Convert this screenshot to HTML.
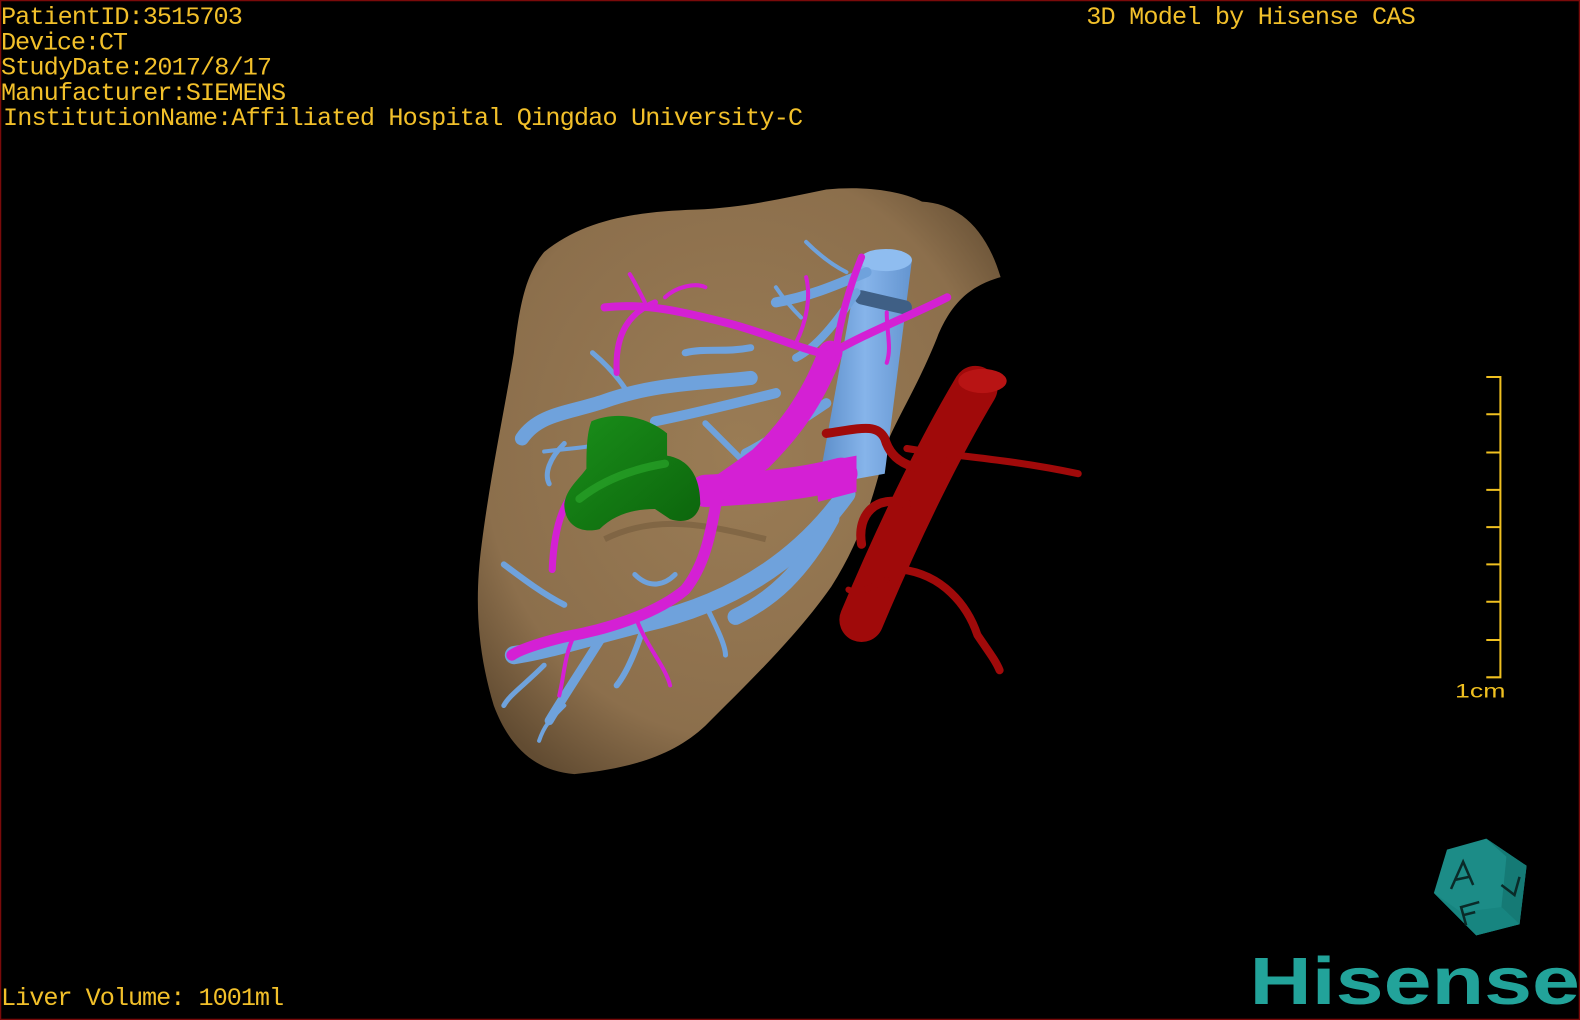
<!DOCTYPE html>
<html><head><meta charset="utf-8"><style>
html,body{margin:0;padding:0;background:#000;width:1580px;height:1020px;overflow:hidden}
svg{display:block}
</style></head><body>
<svg width="1580" height="1020" viewBox="0 0 1568 1012" preserveAspectRatio="none" xmlns="http://www.w3.org/2000/svg">
<defs>
<radialGradient id="lg" cx="0.5" cy="0.45" r="0.65">
<stop offset="0" stop-color="#9a7c55"/><stop offset="0.75" stop-color="#8c6f4c"/><stop offset="1" stop-color="#624c32"/>
</radialGradient>
<linearGradient id="gg" x1="0" y1="0" x2="1" y2="1"><stop offset="0" stop-color="#1a8f1a"/><stop offset="1" stop-color="#0c640c"/></linearGradient>
<linearGradient id="ivc" x1="0" y1="0" x2="1" y2="0"><stop offset="0" stop-color="#5a8cc8"/><stop offset="0.5" stop-color="#86b4ea"/><stop offset="1" stop-color="#6495d0"/></linearGradient>
</defs>
<rect x="0.5" y="0.5" width="1567" height="1011" fill="#000" stroke="#7a0a0a" stroke-width="1.5"/>
<path d="M540,250 C580,218 630,210 690,208 C740,206 780,196 820,188 C860,184 895,190 915,200 C950,202 978,225 993,275 C965,283 945,298 930,335 C912,380 893,410 880,440 C868,490 855,535 825,582 C790,632 740,680 700,720 C670,748 630,762 570,768 C530,765 505,740 490,700 C475,650 470,600 478,540 C487,470 500,410 510,350 C516,300 522,272 540,250 Z" fill="url(#lg)"/>
<path d="M600,535 C650,510 700,520 760,535" stroke="#6d5538" stroke-width="6" fill="none" opacity="0.5"/>
<!-- IVC -->
<path d="M853,256 L905,258 L878,470 L812,482 Z" fill="url(#ivc)"/>
<ellipse cx="879" cy="258" rx="26" ry="11" fill="#8fbdf0"/>
<path d="M855,295 L898,305" stroke="#3f5f85" stroke-width="14" stroke-linecap="round"/>
<g stroke="#6fa2dc" fill="none" stroke-linecap="round" stroke-linejoin="round">
<path d="M840,490 C790,560 720,600 640,618 C590,630 545,645 510,650" stroke-width="18"/>
<path d="M825,515 C795,570 765,595 730,612" stroke-width="16"/>
<path d="M600,628 C580,660 560,690 545,715" stroke-width="9"/>
<path d="M745,375 C700,380 650,380 600,398 C565,410 535,410 518,435" stroke-width="14"/>
<path d="M770,390 C730,400 690,410 650,418" stroke-width="10"/>
<path d="M860,270 C825,285 800,295 770,300" stroke-width="10"/>
<path d="M850,290 C830,320 810,345 790,355" stroke-width="8"/>
<path d="M680,350 C700,345 720,350 745,345" stroke-width="7"/>
<path d="M620,385 C610,370 600,360 588,350" stroke-width="5"/>
<path d="M560,440 C545,455 540,470 545,480" stroke-width="5"/>
<path d="M600,440 C580,445 560,445 540,448" stroke-width="4"/>
<path d="M540,660 C520,680 505,690 500,700" stroke-width="5"/>
<path d="M560,600 C540,590 520,575 500,560" stroke-width="6"/>
<path d="M640,618 C630,650 620,670 612,680" stroke-width="6"/>
<path d="M700,600 C710,620 720,640 720,650" stroke-width="5"/>
<path d="M670,570 C660,580 645,585 630,570" stroke-width="5"/>
<path d="M800,240 C815,255 830,265 840,270" stroke-width="4"/>
<path d="M770,285 C780,300 790,310 795,315" stroke-width="4"/>
<path d="M560,700 C545,715 540,720 535,735" stroke-width="4"/>
<path d="M700,420 C720,440 730,450 740,460" stroke-width="6"/>
<path d="M820,400 C790,420 760,440 740,450" stroke-width="10"/>
</g>
<g stroke="#d420d4" fill="none" stroke-linecap="round" stroke-linejoin="round">
<path d="M700,487 C740,485 790,482 835,470" stroke-width="32"/>
<path d="M824,350 C805,400 780,430 755,455 C735,470 720,480 705,490" stroke-width="24"/>
<path d="M712,492 C705,530 700,560 680,585 C650,610 600,625 560,632 C535,638 515,645 508,650" stroke-width="11"/>
<path d="M822,352 C790,345 760,330 720,320 C680,310 640,300 600,305" stroke-width="8"/>
<path d="M822,352 C860,330 900,315 940,295" stroke-width="8"/>
<path d="M830,345 C835,310 845,280 855,255" stroke-width="7"/>
<path d="M650,300 C625,310 610,330 612,370" stroke-width="6"/>
<path d="M660,295 C670,285 690,280 700,285" stroke-width="4"/>
<path d="M640,300 C635,290 630,280 625,272" stroke-width="4"/>
<path d="M700,485 C660,470 620,470 585,475 C560,490 550,520 548,565" stroke-width="7"/>
<path d="M880,310 C880,330 885,345 880,360" stroke-width="4"/>
<path d="M630,610 C640,640 660,660 665,680" stroke-width="4"/>
<path d="M570,630 C560,650 560,670 555,690" stroke-width="4"/>
<path d="M790,340 C800,320 805,295 800,275" stroke-width="4"/>
</g>
<path d="M808,460 L850,452 L850,488 L812,498 Z" fill="#d420d4"/>
<path d="M587,418 C610,408 640,412 662,430 L662,452 C680,455 695,468 695,500 C692,515 680,520 665,515 L650,505 C630,505 610,510 595,525 C575,530 560,520 560,500 C562,485 575,475 582,465 C582,450 582,430 587,418 Z" fill="url(#gg)"/>
<path d="M575,495 C600,475 630,465 660,460" stroke="#2aa42a" stroke-width="8" fill="none" stroke-linecap="round" opacity="0.7"/>
<g stroke="#a00a0a" fill="none" stroke-linecap="round" stroke-linejoin="round">
<path d="M968,385 C935,440 895,520 855,615" stroke-width="44"/>
<path d="M900,445 C940,452 1000,455 1070,470" stroke-width="7"/>
<path d="M940,462 C910,470 885,460 878,435 C870,420 855,425 820,430" stroke-width="9"/>
<path d="M900,500 C870,490 850,510 855,540" stroke-width="9"/>
<path d="M895,565 C935,570 960,600 970,630 C980,645 988,655 992,665" stroke-width="8"/>
<path d="M880,575 C860,585 850,590 842,585" stroke-width="6"/>
</g>
<ellipse cx="975" cy="378" rx="24" ry="12" fill="#b81414"/>
<g stroke="#f0c020" stroke-width="2" fill="none">
<path d="M1475,374 H1489 V672 H1475"/>
<path d="M1475,411 H1489 M1475,449 H1489 M1475,486 H1489 M1475,523 H1489 M1475,560 H1489 M1475,597 H1489 M1475,635 H1489"/>
</g>
<text x="1444" y="692" fill="#f0c020" font-family="Liberation Sans, sans-serif" font-size="19" textLength="50" lengthAdjust="spacingAndGlyphs">1cm</text>
<g fill="#f2c02a" font-family="Liberation Mono, monospace" font-size="25" lengthAdjust="spacingAndGlyphs">
<text x="1" y="24" textLength="240">PatientID:3515703</text>
<text x="1" y="49" textLength="126">Device:CT</text>
<text x="1" y="74" textLength="269">StudyDate:2017/8/17</text>
<text x="1" y="99" textLength="283">Manufacturer:SIEMENS</text>
<text x="3" y="124" textLength="794">InstitutionName:Affiliated Hospital Qingdao University-C</text>
<text x="1078" y="24" textLength="327">3D Model by Hisense CAS</text>
<text x="1" y="997" textLength="281">Liver Volume: 1001ml</text>
</g>
<polygon points="1423,886 1436,843 1475,832 1515,859 1508,917 1465,928" fill="#1c8c87"/>
<polygon points="1475,832 1515,859 1508,917 1490,900 1495,850" fill="#157a75"/>
<polygon points="1423,886 1465,928 1508,917 1490,900 1450,905" fill="#178580"/>
<g fill="none" stroke="#0a2a28" stroke-width="2.5">
<path d="M1440,882 L1452,855 L1462,878 M1444,873 L1458,870"/>
<path d="M1490,878 L1503,888 L1508,870"/>
<path d="M1455,918 L1450,900 L1468,895 M1452,908 L1464,905"/>
</g>
<text x="1240" y="996" fill="#22a39a" font-family="Liberation Sans, sans-serif" font-weight="bold" font-size="66" textLength="328" lengthAdjust="spacingAndGlyphs">Hisense</text>
</svg>
</body></html>
